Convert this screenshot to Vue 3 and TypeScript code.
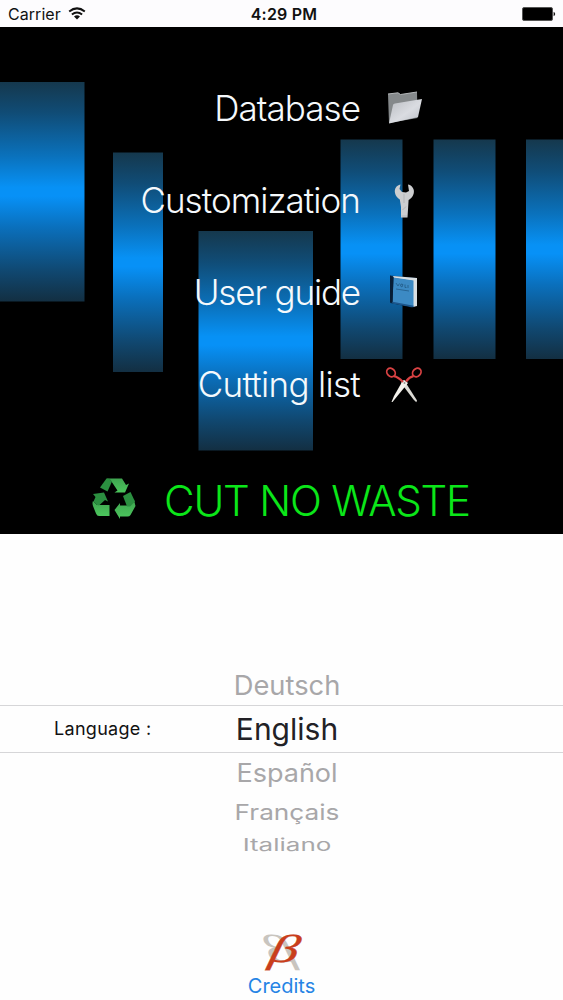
<script setup lang="ts">
interface MenuItem {
  label: string
  icon: 'folder' | 'wrench' | 'book' | 'scissors'
}

const menu: MenuItem[] = [
  { label: 'Database', icon: 'folder' },
  { label: 'Customization', icon: 'wrench' },
  { label: 'User guide', icon: 'book' },
  { label: 'Cutting list', icon: 'scissors' },
]

const panels = [
  { x: -10, y: 55, width: 94.5 },
  { x: 113, y: 125.5, width: 50 },
  { x: 198.5, y: 204, width: 114.5 },
  { x: 340.5, y: 112.5, width: 62 },
  { x: 433.5, y: 112.5, width: 62 },
  { x: 526, y: 112.5, width: 62 },
]

const languages = [
  { name: 'Deutsch', row: 'above' },
  { name: 'English', row: 'selected' },
  { name: 'Español', row: 'below-1' },
  { name: 'Français', row: 'below-2' },
  { name: 'Italiano', row: 'below-3' },
]
</script>

<template>
  <div class="screen">
    <header class="status">
      <div class="carrier">
        <span>Carrier</span>
        <svg width="18" height="13" viewBox="0 0 18 13">
          <g fill="none" stroke="#111" stroke-width="2">
            <path d="M1.2 4.5Q9-1.7 16.8 4.5" />
            <path d="M3.9 7.5Q9 3.4 14.1 7.5" />
          </g>
          <path d="M6 9.4Q9 7.2 12 9.4L9 12.4Z" fill="#111" />
        </svg>
      </div>
      <strong class="time">4:29 PM</strong>
      <svg class="battery" width="34" height="14" viewBox="0 0 34 14">
        <rect x="0.5" y="0.5" width="30" height="13" rx="1.5" fill="#000" stroke="#555" />
        <path d="M31.6 4.8Q33.2 5.5 33.2 7T31.6 9.2Z" fill="#111" />
      </svg>
    </header>

    <main class="hero">
      <svg class="backdrop" width="563" height="507" viewBox="0 0 563 507">
        <defs>
          <linearGradient id="panel" x1="0" y1="0" x2="0" y2="1">
            <stop offset="0" stop-color="#15384d" />
            <stop offset=".14" stop-color="#104c76" />
            <stop offset=".34" stop-color="#0a72bd" />
            <stop offset=".48" stop-color="#0791f5" />
            <stop offset=".52" stop-color="#0791f7" />
            <stop offset=".66" stop-color="#0a70bd" />
            <stop offset=".86" stop-color="#104871" />
            <stop offset="1" stop-color="#132f42" />
          </linearGradient>
        </defs>
        <rect v-for="(p, i) in panels" :key="i" :x="p.x" :y="p.y" :width="p.width" height="219.5" fill="url(#panel)" />
      </svg>

      <nav class="menu">
        <a v-for="item in menu" :key="item.icon" class="entry">
          <span class="label" :class="item.icon">{{ item.label }}</span>
          <svg v-if="item.icon === 'folder'" class="icon" width="44" height="44" viewBox="0 0 44 44">
            <defs>
              <linearGradient id="folder" x1="0" y1="0" x2="1" y2="1">
                <stop offset="0" stop-color="#b9bcc1" /><stop offset=".55" stop-color="#dadce1" /><stop offset="1" stop-color="#babec5" />
              </linearGradient>
            </defs>
            <path d="M6 7L16 5.8L18.5 7.5L35 5L35.5 31L7 36Z" fill="#85898b" />
            <path d="M6 7L16 5.8L18.5 7.5L35 5" fill="none" stroke="#b5b8ba" />
            <path d="M11 18Q11.3 16.8 13 16.4L40 12L36 30L7 36.5Z" fill="url(#folder)" />
          </svg>
          <svg v-else-if="item.icon === 'wrench'" class="icon" width="44" height="44" viewBox="0 0 44 44">
            <path d="M18.5 5.5C14 6.5 12.2 10 13 14C13.5 17 15.5 18.7 17.8 20.5L19 28L19 38.5H25.5L26.6 21C30 19 32.5 15.5 31.8 11C31 8 28.8 5.8 26 5.4L27 12L24 13.6L20 13L17.5 10Z" fill="#cdced0" />
            <path d="M22 15V24M20.5 31L24 27.5M19.5 37H25" fill="none" stroke="#b5b6b8" />
          </svg>
          <svg v-else-if="item.icon === 'book'" class="icon" width="44" height="44" viewBox="0 0 44 44">
            <path d="M8 4.5L34.5 7V34.5L30 36.5L8 32Z" fill="#0b355b" />
            <path d="M11 5L35 7V35L31 36V10L12 7Z" fill="#d9dfe2" />
            <path d="M11.5 6.5L31.5 9.5V36L10.5 32Z" fill="#3c8ac4" />
            <path d="M8 4.5L11.5 6.5L10.5 32L8 31.2Z" fill="#071d35" />
            <path d="M10.5 31.5L31.5 35.5" stroke="#1c568c" stroke-width="1.5" />
            <path d="M14 12L16 15L17.5 12.5M19 13L21 13.5L20 16L18.5 15ZM23 13.5V16.5H24.5M26 14V17M14 18L27 20" fill="none" stroke="#225a86" stroke-width=".8" />
          </svg>
          <svg v-else class="icon" width="44" height="44" viewBox="0 0 44 44">
            <path d="M22 17L35 37.5L34.3 39.3L31.5 36.5L19 20Z" fill="#dcdbd5" />
            <path d="M22 17L26 20L10.5 39L9.5 39L12 33L20 19Z" fill="#f4f2ec" />
            <g fill="none" stroke="#d94243" stroke-width="1.8">
              <ellipse cx="9" cy="9.5" rx="3.8" ry="4.7" transform="rotate(-43 9 9.5)" />
              <ellipse cx="34.8" cy="9.5" rx="3.8" ry="4.7" transform="rotate(43 34.8 9.5)" />
              <path d="M12 13.2Q16 14 21 19M31.5 13.2Q27.5 14 24 18.5" stroke-width="2.2" />
            </g>
            <circle cx="22.5" cy="20" r="1" fill="#989794" />
          </svg>
        </a>
      </nav>

      <div class="brand">
        <svg width="44" height="42" viewBox="0 0 44 42">
          <defs>
            <linearGradient id="leaf" x1="0" y1="0" x2="0" y2="1">
              <stop offset="0" stop-color="#3fa550" /><stop offset="1" stop-color="#4cc65d" />
            </linearGradient>
          </defs>
          <g fill="url(#leaf)">
            <path d="M14.5 1.5H30L34 8L37 6.5L33 15.5H22.5L25.5 13.5L18.5 3Z" />
            <path d="M1 24L5 28L17.5 28V39H7Q5 39 4 36.5L1 29Q0 26 1 24Z" />
            <path d="M42 23L43.5 29L38.5 38Q37.5 39.5 35.5 39.5H28V42L22.5 33L28 26V28.5H38Z" />
          </g>
          <g fill="#2b8f40">
            <path d="M14.5 1.5Q18 1 20 4.5L15.5 14.5L8 10.5Z" />
            <path d="M1 17L12 15.5L16 24.5L13 23L7 28.5L5 28L1.5 24.5L3.5 20Z" />
            <path d="M31 19L38.5 15L43 24.5L38 29.5H35Z" />
          </g>
        </svg>
        <h1>CUT NO WASTE</h1>
      </div>
    </main>

    <section class="picker">
      <label class="caption">Language :</label>
      <ul class="wheel">
        <li v-for="lang in languages" :key="lang.name" :class="lang.row"><span>{{ lang.name }}</span></li>
      </ul>
    </section>

    <footer class="credits">
      <svg class="monogram" width="84" height="64" viewBox="-20 -12 84 64">
        <text transform="translate(37.2 30.2) skewX(12) scale(-1.5 1)" fill="#c9c5bf">β</text>
        <text transform="translate(7.8 30.2) skewX(-12) scale(1.5 1)" fill="#c93e1c" stroke="#c93e1c" stroke-width=".3">β</text>
      </svg>
      <a>Credits</a>
    </footer>
  </div>
</template>

<style>
body {
  margin: 0;
  background: #fff;
}
</style>

<style scoped>
.screen {
  width: 563px;
  height: 1000px;
  overflow: hidden;
  display: flex;
  flex-direction: column;
  background: #fefefe;
  color: #111;
  font-family: Inter, "Liberation Sans", sans-serif;
}
.status {
  height: 27px;
  box-sizing: border-box;
  padding: 0 7px 0 8px;
  display: grid;
  grid-template-columns: 1fr auto 1fr;
  align-items: center;
  font-size: 16px;
  background: #fdfcfe;
}
.carrier {
  display: flex;
  align-items: center;
  gap: 7px;
  padding-top: 1px;
  letter-spacing: 0.05px;
}
.carrier svg { margin-top: -2px; }
.time {
  font-weight: 600;
  padding: 1px 0 0 4px;
  letter-spacing: 0.2px;
}
.battery { justify-self: end; }
.hero {
  position: relative;
  height: 507px;
  flex: none;
  background: #000;
  box-sizing: border-box;
  padding-top: 36px;
}
.backdrop {
  position: absolute;
  left: 0;
  top: 0;
}
.menu, .brand { position: relative; }
.menu { height: 368px; }
.entry {
  height: 92px;
  display: grid;
  grid-template-columns: 360px 44px;
  column-gap: 22px;
  align-items: center;
}
.label {
  justify-self: end;
  padding-bottom: 2px;
  color: #f5f9fc;
  font-size: 35px;
  line-height: 44px;
  font-weight: 300;
  letter-spacing: -0.95px;
  white-space: nowrap;
}
.label.book { letter-spacing: -1.15px; }
.label.scissors { letter-spacing: -0.7px; }
.brand {
  display: flex;
  align-items: center;
  gap: 29px;
  padding-left: 92px;
  height: 50px;
  margin-top: 42px;
}
h1 {
  margin: 5px 0 0 -1px;
  color: #0be619;
  font-size: 42px;
  line-height: 50px;
  font-weight: 300;
  letter-spacing: -1.2px;
  white-space: nowrap;
}
.picker {
  flex: none;
  height: 330px;
  padding-top: 1px;
  box-sizing: border-box;
  display: grid;
  grid-template-columns: 206px 162px 1fr;
}
.caption {
  padding: 183px 0 0 54px;
  font-size: 18px;
  line-height: 22px;
  letter-spacing: 0.3px;
  color: #111;
}
.wheel {
  grid-column: 2;
  margin: 128px 0 0;
  padding: 0;
  list-style: none;
  color: #a8a7a9;
}
.wheel li {
  display: flex;
  align-items: center;
  justify-content: center;
  font-size: 30px;
  white-space: nowrap;
}
.wheel .above {
  height: 42px;
  font-size: 27.3px;
}
.wheel .above span { transform: translateY(1px) scaleY(0.98); }
.wheel .selected {
  height: 46px;
  margin: 0 -206px 0 -206px;
  border: solid #d6d6d8;
  border-width: 1px 0;
  color: #222126;
}
.wheel .below-1 {
  height: 41px;
  font-size: 27px;
}
.wheel .below-1 span { transform: translateY(-1px) scaleY(0.95); }
.wheel .below-2 {
  height: 38px;
  font-size: 26.2px;
}
.wheel .below-2 span { transform: translateY(-1px) scaleY(0.83); }
.wheel .below-3 {
  height: 26px;
  font-size: 26px;
}
.wheel .below-3 span { transform: translateY(-1px) scaleY(0.64); }
.credits {
  display: flex;
  flex-direction: column;
  align-items: center;
  padding-top: 68px;
}
.monogram {
  margin: -12px 0;
  overflow: visible;
  font-family: "Liberation Serif", serif;
  font-style: italic;
  font-size: 39px;
}
.credits a {
  margin-top: 2px;
  color: #2584e5;
  font-size: 20px;
  line-height: 24px;
}
</style>
